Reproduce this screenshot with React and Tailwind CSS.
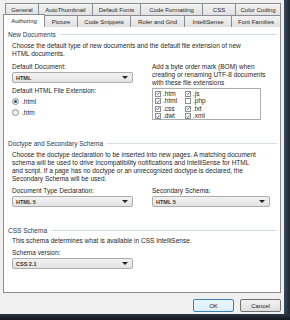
import { useState } from 'react'

const row1 = [
  ['General', 33],
  ['AutoThumbnail', 54],
  ['Default Fonts', 48],
  ['Code Formatting', 62],
  ['CSS', 33],
  ['Color Coding', 46],
]

const row2 = [
  ['Authoring', 42],
  ['Picture', 33],
  ['Code Snippets', 53],
  ['Roler and Grid', 54],
  ['IntelliSense', 47],
  ['Font Families', 49],
]

function Group({ title }) {
  return (
    <div className="flex items-center gap-1 pl-[4px] pr-[3px] h-[9px]">
      <span className="text-[#1e395b]">{title}</span>
      <div className="flex-1 h-px bg-[#d5dfe5]" />
    </div>
  )
}

function Select({ value, width }) {
  return (
    <div
      className="h-[11px] flex items-center justify-between pl-[3px] pr-[4px] border border-[#acacac] rounded-[2px] bg-gradient-to-b from-[#f2f2f2] to-[#e3e3e3]"
      style={{ width }}
    >
      <span className="font-bold text-[#333] text-[5.5px]">{value}</span>
      <span className="w-0 h-0 border-l-[3px] border-r-[3px] border-t-[3px] border-l-transparent border-r-transparent border-t-[#222]" />
    </div>
  )
}

function Radio({ label, checked }) {
  return (
    <div className="flex items-center gap-[3px] h-[11px]">
      <span className="w-[7px] h-[7px] rounded-full border border-[#8e8f8f] bg-gradient-to-b from-[#e6e6e6] to-[#fafafa] flex items-center justify-center">
        {checked && <span className="w-[3px] h-[3px] rounded-full bg-[#1c5180]" />}
      </span>
      <span>{label}</span>
    </div>
  )
}

function Check({ label, checked }) {
  return (
    <div className="flex items-center gap-[2px] h-[7.5px]">
      <span className="w-[6px] h-[6px] border border-[#8e8f8f] bg-white flex items-center justify-center">
        {checked && (
          <svg width="5" height="5" viewBox="0 0 5 5">
            <path d="M0.7 2.6 L2 3.9 L4.4 0.9" fill="none" stroke="#2a4d9e" strokeWidth="1" />
          </svg>
        )}
      </span>
      <span>{label}</span>
    </div>
  )
}

export default function App() {
  const [tab] = useState('Authoring')

  return (
    <div
      className="w-[290px] h-[320px] flex flex-col overflow-hidden text-[6.5px] leading-[8px] text-[#262626]"
      style={{ fontFamily: '"Liberation Sans", Arial, sans-serif' }}
    >
      <div className="flex-1 flex">
        <div className="flex-1 bg-[#f0f0f0] flex flex-col pl-[3px] pr-[3px]">
          {/* back tab row */}
          <div className="flex pl-[2px] pt-[3px] h-[15px] text-[6px]">
            {row1.map(([name, w]) => (
              <div
                key={name}
                className="h-[12px] flex items-center justify-center border border-b-0 border-r-0 last:border-r border-[#898c95] bg-gradient-to-b from-[#f2f2f2] to-[#e1e1e1]"
                style={{ width: w }}
              >
                {name}
              </div>
            ))}
          </div>
          {/* front tab row */}
          <div className="flex h-[12px] relative z-10 text-[6px]">
            {row2.map(([name, w]) =>
              name === tab ? (
                <div
                  key={name}
                  className="h-[13px] -mt-[1px] flex items-center justify-center border border-b-0 border-[#898c95] bg-white"
                  style={{ width: w }}
                >
                  {name}
                </div>
              ) : (
                <div
                  key={name}
                  className="h-[12px] flex items-center justify-center border border-b-0 border-l-0 last:border-r border-[#898c95] bg-gradient-to-b from-[#f2f2f2] to-[#e1e1e1]"
                  style={{ width: w }}
                >
                  {name}
                </div>
              )
            )}
          </div>

          {/* panel */}
          <div className="h-[267px] -mt-px bg-white border border-[#898c95] flex flex-col pt-[3px]">
            <Group title="New Documents" />
            <div className="pl-[8px] pr-[6px] pt-[3px]">
              <p>
                Choose the default type of new documents and the default file extension of new
                <br />
                HTML documents.
              </p>
              <div className="flex mt-[5px]">
                <div className="w-[140px] flex flex-col">
                  <span className="h-[8px]">Default Document:</span>
                  <div className="mt-[1px]">
                    <Select value="HTML" width={121} />
                  </div>
                  <span className="mt-[4px] h-[8px]">Default HTML File Extension:</span>
                  <div className="mt-[1px] flex flex-col">
                    <Radio label=".html" checked />
                    <Radio label=".htm" />
                  </div>
                </div>
                <div className="flex flex-col">
                  <p>
                    Add a byte order mark (BOM) when
                    <br />
                    creating or renaming UTF-8 documents
                    <br />
                    with these file extensions
                  </p>
                  <div className="mt-[1px] w-[109px] h-[32px] border border-[#acacac] bg-white flex pl-[2px] pt-[1px]">
                    <div className="w-[30px] flex flex-col">
                      <Check label=".htm" checked />
                      <Check label=".html" checked />
                      <Check label=".css" checked />
                      <Check label=".dwt" checked />
                    </div>
                    <div className="flex flex-col">
                      <Check label=".js" checked />
                      <Check label=".php" />
                      <Check label=".txt" checked />
                      <Check label=".xml" checked />
                    </div>
                  </div>
                </div>
              </div>
            </div>

            <div className="mt-[19px]">
              <Group title="Doctype and Secondary Schema" />
            </div>
            <div className="pl-[8px] pr-[6px] pt-[3px]">
              <p>
                Choose the doctype declaration to be inserted into new pages. A matching document
                <br />
                schema will be used to drive incompatibility notifications and IntelliSense for HTML
                <br />
                and script. If a page has no doctype or an unrecognized doctype is declared, the
                <br />
                Secondary Schema will be used.
              </p>
              <div className="flex mt-[4px]">
                <div className="w-[140px] flex flex-col">
                  <span className="h-[8px]">Document Type Declaration:</span>
                  <div className="mt-[1px]">
                    <Select value="HTML 5" width={121} />
                  </div>
                </div>
                <div className="flex flex-col">
                  <span className="h-[8px]">Secondary Schema:</span>
                  <div className="mt-[1px]">
                    <Select value="HTML 5" width={118} />
                  </div>
                </div>
              </div>
            </div>

            <div className="mt-[19px]">
              <Group title="CSS Schema" />
            </div>
            <div className="pl-[8px] pr-[6px] pt-[2px]">
              <p>This schema determines what is available in CSS IntelliSense.</p>
              <span className="block mt-[4px] h-[8px]">Schema version:</span>
              <div className="mt-[1px]">
                <Select value="CSS 2.1" width={121} />
              </div>
            </div>
          </div>

          {/* buttons */}
          <div className="flex justify-end gap-[6px] mt-[6px]">
            <button className="w-[41px] h-[13px] rounded-[2px] border border-[#3c7fb1] bg-gradient-to-b from-[#eaf6fd] to-[#d9f0fc] text-[6px] leading-none text-[#1b1b1b]">
              OK
            </button>
            <button className="w-[41px] h-[13px] rounded-[2px] border border-[#707070] bg-gradient-to-b from-[#f2f2f2] to-[#dddddd] text-[6px] leading-none text-[#1b1b1b]">
              Cancel
            </button>
          </div>
        </div>
        <div className="w-[6px] bg-gradient-to-r from-[#3a4a5c] to-[#1c2733]" />
      </div>
      <div className="h-[6px] bg-gradient-to-b from-[#2b3644] to-[#121820]" />
    </div>
  )
}
